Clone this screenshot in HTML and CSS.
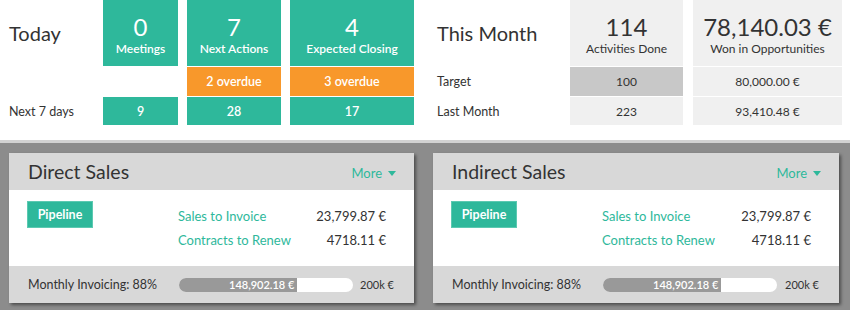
FILE: index.html
```html
<!DOCTYPE html>
<html lang="en">
<head>
  <meta charset="UTF-8">
  <meta name="viewport" content="width=device-width, initial-scale=1.0">
  <title>Sales Dashboard</title>
  <link rel="stylesheet" href="styles.css">
</head>
<body>
  <div class="summary">
    <div class="stats today">
      <div class="label big">Today</div>
      <div class="tile"><span class="num">0</span><span class="cap">Meetings</span></div>
      <div class="tile"><span class="num">7</span><span class="cap">Next Actions</span></div>
      <div class="tile"><span class="num">4</span><span class="cap">Expected Closing</span></div>

      <div class="label"></div>
      <div></div>
      <div class="cell warn">2 overdue</div>
      <div class="cell warn">3 overdue</div>

      <div class="label">Next 7 days</div>
      <div class="cell">9</div>
      <div class="cell">28</div>
      <div class="cell">17</div>
    </div>

    <div class="stats month">
      <div class="label big">This Month</div>
      <div class="tile light"><span class="num">114</span><span class="cap">Activities Done</span></div>
      <div class="tile light"><span class="num">78,140.03 €</span><span class="cap">Won in Opportunities</span></div>

      <div class="label">Target</div>
      <div class="cell light dim">100</div>
      <div class="cell light">80,000.00 €</div>

      <div class="label">Last Month</div>
      <div class="cell light">223</div>
      <div class="cell light">93,410.48 €</div>
    </div>
  </div>

  <div class="teams">
    <div class="card">
      <div class="card-head">
        <h2>Direct Sales</h2>
        <a class="more" href="#">More <span class="caret"></span></a>
      </div>
      <div class="card-body">
        <button class="btn" type="button">Pipeline</button>
        <div class="figures">
          <a href="#">Sales to Invoice</a><span>23,799.87 €</span>
          <a href="#">Contracts to Renew</a><span>4718.11 €</span>
        </div>
      </div>
      <div class="card-foot">
        <span class="foot-label">Monthly Invoicing: 88%</span>
        <div class="bar"><div class="fill" style="width: 68%">148,902.18 €</div></div>
        <span class="goal">200k €</span>
      </div>
    </div>

    <div class="card">
      <div class="card-head">
        <h2>Indirect Sales</h2>
        <a class="more" href="#">More <span class="caret"></span></a>
      </div>
      <div class="card-body">
        <button class="btn" type="button">Pipeline</button>
        <div class="figures">
          <a href="#">Sales to Invoice</a><span>23,799.87 €</span>
          <a href="#">Contracts to Renew</a><span>4718.11 €</span>
        </div>
      </div>
      <div class="card-foot">
        <span class="foot-label">Monthly Invoicing: 88%</span>
        <div class="bar"><div class="fill" style="width: 68%">148,902.18 €</div></div>
        <span class="goal">200k €</span>
      </div>
    </div>
  </div>
</body>
</html>
```

FILE: styles.css
```css
body {
  font-family: Lato, "Open Sans", sans-serif;
  margin: 0;
  padding: 0;
  color: #333;
  background-color: #fff;
}

.summary {
  display: flex;
  gap: 23px;
  padding: 0 0 0 9px;
  height: 140px;
}

.stats {
  display: grid;
  grid-template-rows: 66px 29px 28px;
  row-gap: 1px;
  column-gap: 9px;
}

.today {
  grid-template-columns: 85px 75px 94px 124px;
}

.month {
  grid-template-columns: 123px 113px 149px;
  column-gap: 10px;
}

.label {
  display: flex;
  align-items: center;
  font-size: 12.5px;
}

.label.big {
  font-size: 20px;
}

.tile {
  display: flex;
  flex-direction: column;
  align-items: center;
  justify-content: center;
  background-color: #2eb89b;
  color: #fff;
  padding-top: 3px;
}

.num {
  font-size: 24px;
  line-height: 27px;
}

.cap {
  font-size: 12px;
  font-weight: 600;
  line-height: 17px;
}

.cell {
  display: flex;
  align-items: center;
  justify-content: center;
  background-color: #2eb89b;
  color: #fff;
  font-size: 12.5px;
  font-weight: 600;
}

.cell.warn {
  background-color: #f8982b;
}

.tile.light,
.cell.light {
  background-color: #f0f0f0;
  color: #333;
}

.tile.light .cap,
.cell.light {
  font-weight: normal;
}

.cell.light {
  font-size: 12px;
}

.cell.light.dim {
  background-color: #c8c8c8;
}

.teams {
  display: grid;
  grid-template-columns: 405px 406px;
  column-gap: 19px;
  padding: 10px 11px 0 9px;
  height: 157px;
  background-color: #8c8c8c;
  border-top: 3px solid #d2d2d2;
}

.card {
  display: flex;
  flex-direction: column;
  height: 150px;
  box-shadow: 2px 2px 3px rgba(0, 0, 0, 0.45);
}

.card-head {
  display: flex;
  justify-content: space-between;
  align-items: center;
  height: 37px;
  padding: 0 18px 0 19px;
  background-color: #d8d8d8;
}

.card-head h2 {
  margin: 0;
  font-size: 19.5px;
  font-weight: normal;
}

.more {
  display: flex;
  align-items: center;
  gap: 6px;
  color: #2eb89b;
  font-size: 13px;
  text-decoration: none;
  margin-top: 3px;
}

.caret {
  width: 0;
  height: 0;
  border-left: 4px solid transparent;
  border-right: 4px solid transparent;
  border-top: 5px solid #2eb89b;
}

.card-body {
  display: flex;
  height: 76px;
  padding: 11px 28px 0 18px;
  box-sizing: border-box;
  background-color: #fff;
}

.btn {
  height: 27px;
  width: 66px;
  padding: 0;
  border: 1px solid #5cc9b1;
  background-color: #2eb89b;
  color: #fff;
  font-family: inherit;
  font-size: 12.5px;
  font-weight: bold;
  cursor: pointer;
}

.figures {
  display: grid;
  grid-template-columns: 1fr auto;
  grid-auto-rows: 24px;
  align-items: center;
  margin-left: 85px;
  flex: 1;
  font-size: 13px;
  padding-top: 3px;
}

.figures a {
  color: #2eb89b;
  text-decoration: none;
}

.figures span {
  text-align: right;
}

.card-foot {
  display: flex;
  align-items: center;
  height: 37px;
  padding: 0 20px 0 19px;
  background-color: #d8d8d8;
  font-size: 12.5px;
}

.foot-label {
  width: 151px;
}

.bar {
  width: 174px;
  height: 14px;
  border-radius: 7px;
  background-color: #fff;
  overflow: hidden;
}

.fill {
  height: 100%;
  background-color: #999;
  color: #fff;
  font-size: 11px;
  font-weight: 600;
  line-height: 14px;
  text-align: right;
  padding-right: 3px;
  box-sizing: border-box;
}

.goal {
  margin-left: auto;
  font-size: 11px;
}
```
